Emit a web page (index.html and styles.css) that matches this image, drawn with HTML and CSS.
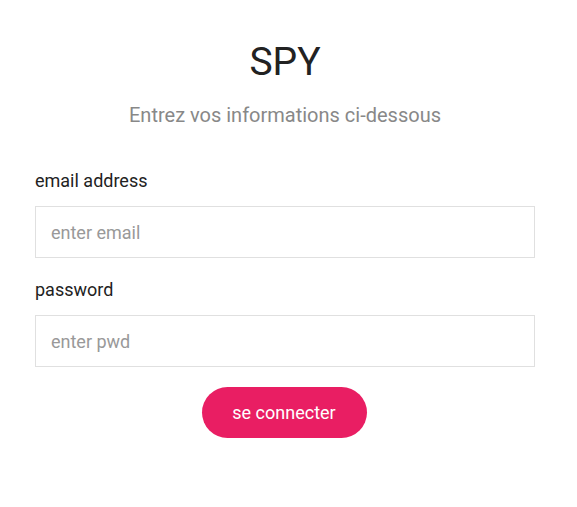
FILE: index.html
```html
<!DOCTYPE html>
<html lang="fr">
<head>
<meta charset="utf-8">
<title>SPY</title>
<link rel="stylesheet" href="styles.css">
</head>
<body>
<div class="wrap">
	<h1 class="title">SPY</h1>
	<p class="subtitle">Entrez vos informations ci-dessous</p>
	<form class="login_form">
		<label class="field_label" for="email">email address</label>
		<input class="field_input" id="email" type="text" placeholder="enter email">
		<label class="field_label" for="pwd">password</label>
		<input class="field_input" id="pwd" type="password" placeholder="enter pwd">
		<div class="btn_row">
			<button class="btn_login" type="button">se connecter</button>
		</div>
	</form>
</div>
</body>
</html>
```

FILE: styles.css
```css
* {margin:0; padding:0; box-sizing:border-box}
body {
	font-family: Roboto, "Liberation Sans", sans-serif;
	background-color: #fff;
	color: #222;
}

.wrap {
	width: 500px;
	margin: 0 0 0 35px;
	padding-top: 38px;
}
.title {
	font-size: 39px;
	font-weight: 400;
	text-align: center;
	line-height: 48px;
	color: #222;
}
.subtitle {
	margin-top: 17px;
	font-size: 20px;
	line-height: 24px;
	text-align: center;
	color: #888;
}
.login_form {
	display: flex;
	flex-direction: column;
	margin-top: 42px;
}
.field_label {
	font-size: 18px;
	line-height: 24px;
	color: #222;
}
.field_input {
	margin-top: 13px;
	height: 52px;
	border: 1px solid #e0e0e0;
	padding: 0 15px;
	font-family: inherit;
	font-size: 18px;
	color: #222;
	outline: none;
}
.field_input::placeholder {
	color: #999;
}
.field_input + .field_label {
	margin-top: 20px;
}
.btn_row {
	display: flex;
	justify-content: center;
	margin-top: 20px;
}
.btn_login {
	width: 165px;
	height: 51px;
	margin-right: 2px;
	border: none;
	border-radius: 26px;
	background-color: #e91e63;
	color: #fff;
	font-family: inherit;
	font-size: 18px;
	cursor: pointer;
}
```
